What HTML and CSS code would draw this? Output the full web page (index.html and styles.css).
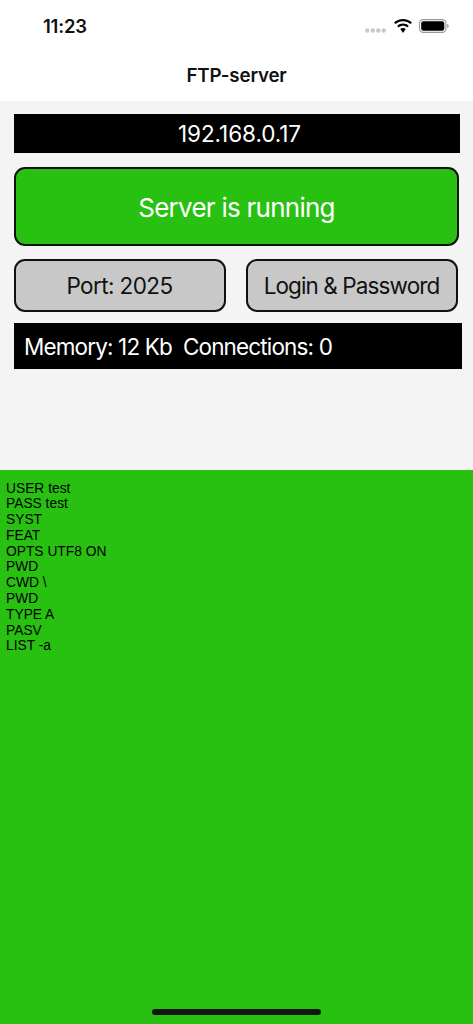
FILE: index.html
```html
<!DOCTYPE html>
<html lang="en">
<head>
<meta charset="utf-8">
<title>FTP-server</title>
<link rel="stylesheet" href="styles.css">
</head>
<body>
<div class="screen">
  <header class="top">
    <div class="status">
      <span class="time">11:23</span>
      <div class="status-icons">
        <svg class="signal" width="21" height="5" viewBox="0 0 21 5"><circle cx="2.300" cy="2.500" r="2.200"/><circle cx="7.800" cy="2.500" r="2.200"/><circle cx="13.300" cy="2.500" r="2.200"/><circle cx="18.700" cy="2.500" r="2.200"/></svg>
        <svg class="wifi" width="18" height="14" viewBox="1.200 0.600 15.600 12.600" preserveAspectRatio="none"><path d="M9 2.600c2.500 0 4.800 1 6.500 2.600l1.300-1.400C14.800 1.800 12 .6 9 .6S3.200 1.800 1.200 3.800l1.300 1.400C4.200 3.600 6.500 2.600 9 2.600z"/><path d="M9 6.700c1.400 0 2.700.5 3.700 1.500l1.300-1.400C12.700 5.500 10.900 4.700 9 4.700s-3.700.8-5 2.100l1.300 1.400c1-1 2.300-1.500 3.700-1.500z"/><path d="M9 8.800c-1 0-1.800.4-2.400.9L9 13.200l2.400-3.500c-.6-.5-1.400-.9-2.400-.9z"/></svg>
        <svg class="battery" width="30" height="14" viewBox="0 0 30 14"><rect x="0.600" y="0.600" width="26.300" height="12.800" rx="3.600" fill="none" stroke="#9a9a9a" stroke-width="1.100"/><rect x="2.200" y="2.200" width="23.100" height="9.600" rx="2.200" fill="#000"/><path d="M28.200 4.900c.9.300 1.500 1.100 1.500 2.100s-.6 1.800-1.500 2.100z" fill="#9a9a9a"/></svg>
      </div>
    </div>
    <h1 class="title">FTP-server</h1>
  </header>
  <main class="panel">
    <div class="ip">192.168.0.17</div>
    <button class="state" type="button">Server is running</button>
    <div class="pair">
      <button class="small" type="button">Port: 2025</button>
      <button class="small" type="button">Login &amp; Password</button>
    </div>
    <div class="stats">Memory: 12 Kb&nbsp; Connections: 0</div>
  </main>
  <section class="log">
    <div>USER test</div>
    <div>PASS test</div>
    <div>SYST</div>
    <div>FEAT</div>
    <div>OPTS UTF8 ON</div>
    <div>PWD</div>
    <div>CWD \</div>
    <div>PWD</div>
    <div>TYPE A</div>
    <div>PASV</div>
    <div>LIST -a</div>
  </section>
  <div class="home"></div>
</div>
</body>
</html>
```
FILE: styles.css
```css
* { box-sizing: border-box; }
html, body { margin: 0; padding: 0; }
body { background: #fff; font-family: Inter, "Liberation Sans", sans-serif; }
.screen { position: relative; width: 473px; height: 1024px; display: flex; flex-direction: column; overflow: hidden; }
.top { height: 101px; background: #fff; display: flex; flex-direction: column; }
.status { height: 52px; display: flex; align-items: center; justify-content: space-between; padding: 0 24px 0 43px; }
.time { font-size: 18.500px; font-weight: 600; color: #111; letter-spacing: -0.2px; }
.status-icons { display: flex; align-items: center; gap: 8px; }
.signal { fill: #c8c8c8; margin-top: 9px; }
.wifi { fill: #000; margin-right: -1px; }
.title { margin: 0; font-size: 18.800px; font-weight: 600; color: #111; text-align: center; line-height: 48px; letter-spacing: -0.2px; }
.panel { height: 369px; background: #f4f4f4; padding: 13px 0 0 14px; display: flex; flex-direction: column; }
.ip { width: 446px; height: 39px; background: #000; color: #fff; font-size: 22.500px; line-height: 40px; text-align: center; letter-spacing: -0.07px; padding-left: 5px; }
.state { width: 445px; height: 79px; margin-top: 14px; background: #28c112; color: #fff; border: 2px solid #111; border-radius: 11px; font: 400 26px Inter, sans-serif; letter-spacing: -0.75px; padding: 2px 0 0; }
.pair { display: flex; gap: 20px; margin-top: 13px; width: 444px; }
.small { flex: 1; height: 53px; background: #c8c8c8; color: #111; border: 2px solid #111; border-radius: 11px; font: 400 22.500px Inter, sans-serif; letter-spacing: -0.6px; padding: 0 1px 0 0; white-space: nowrap; }
.small + .small { letter-spacing: -0.9px; }
.stats { width: 448px; height: 46px; margin-top: 11px; background: #000; color: #fff; font-size: 22.500px; line-height: 47px; padding-left: 10px; letter-spacing: -0.85px; white-space: pre; }
.log { flex: 1; background: #28c112; color: #000; padding: 10.500px 6px 0; font-family: "Liberation Sans", Arial, sans-serif; font-size: 13.800px; line-height: 15.800px; }
.home { position: absolute; left: 152px; bottom: 9px; width: 169px; height: 6px; border-radius: 3px; background: #141414; }
```
